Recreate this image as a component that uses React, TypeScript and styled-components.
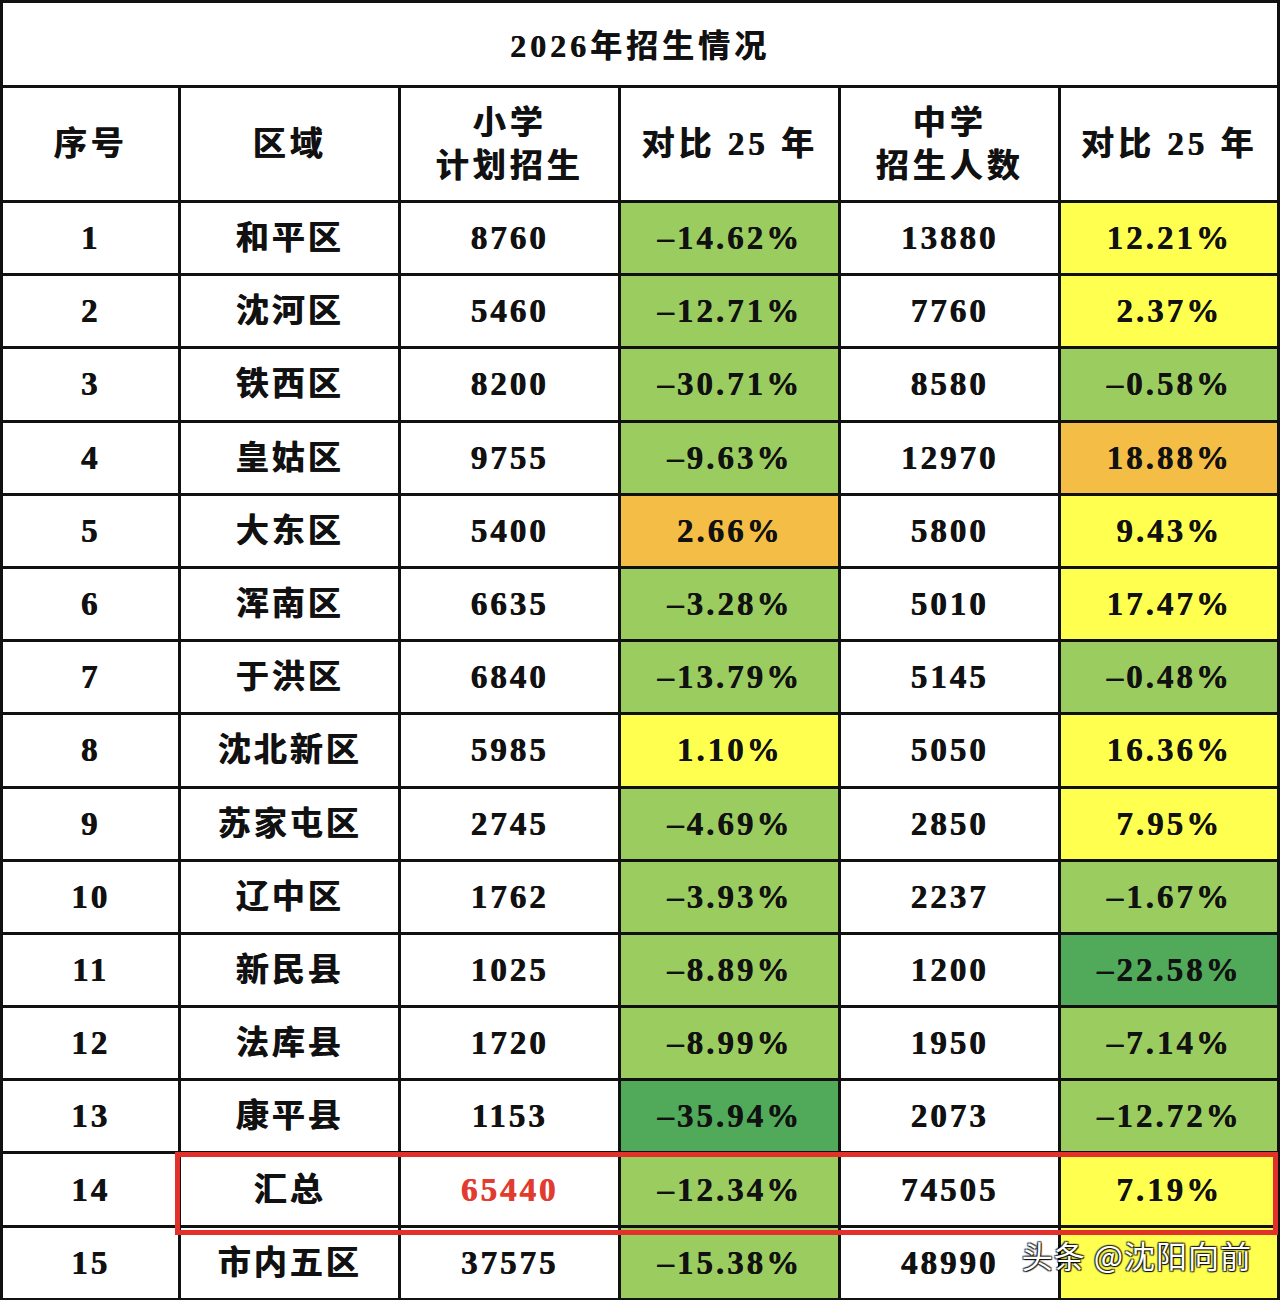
import React from 'react'
import styled, { createGlobalStyle } from 'styled-components'

const GlobalStyle = createGlobalStyle`
  html, body {
    margin: 0;
    padding: 0;
    background: #ffffff;
  }
  * {
    box-sizing: border-box;
  }
`

const Sheet = styled.div`
  position: relative;
  width: 1280px;
  border-left: 3px solid #111;
  border-top: 3px solid #111;
  font-family: "Liberation Serif", "Noto Sans CJK SC", serif;
  font-weight: 700;
  color: #111;
`

const Title = styled.div`
  height: 85px;
  display: flex;
  align-items: center;
  justify-content: center;
  border-right: 3px solid #111;
  border-bottom: 3px solid #111;
  font-size: 32px;
  letter-spacing: 4px;
  text-shadow: 0.6px 0 0 currentColor;
  padding-bottom: 3px;
`

const Row = styled.div<{ $tall?: boolean }>`
  position: relative;
  display: grid;
  grid-template-columns: 178px 220px 220px 220px 220px 1fr;
  height: ${p => (p.$tall ? '115px' : '73.2px')};
`

const Cell = styled.div<{ $bg?: string; $red?: boolean }>`
  display: flex;
  flex-direction: column;
  align-items: center;
  justify-content: center;
  border-right: 3px solid #111;
  border-bottom: 3px solid #111;
  background: ${p => p.$bg || '#ffffff'};
  color: ${p => (p.$red ? '#e23b2f' : '#111')};
  font-size: 33px;
  letter-spacing: 3px;
  line-height: 1;
  text-shadow: 0.7px 0 0 currentColor;
  padding-top: 1px;
`

const HeadLine = styled.span`
  display: block;
  line-height: 43px;
  letter-spacing: 4px;
`

const Highlight = styled.div`
  position: absolute;
  z-index: 2;
  left: 172px;
  right: 2px;
  top: -2px;
  bottom: -7px;
  border: 5px solid #e2312b;
  pointer-events: none;
`

const Watermark = styled.div`
  position: absolute;
  z-index: 3;
  right: 28px;
  bottom: 24px;
  font-family: "Noto Sans CJK SC", "Noto Sans", sans-serif;
  font-weight: 400;
  font-size: 31px;
  letter-spacing: 1px;
  color: #ffffff;
  text-shadow:
    1px 1px 1px rgba(0, 0, 0, 0.9),
    -1px -1px 1px rgba(0, 0, 0, 0.7),
    1px -1px 1px rgba(0, 0, 0, 0.7),
    -1px 1px 1px rgba(0, 0, 0, 0.7);
  pointer-events: none;
`

const LIGHT = '#9bcc5f'
const DARK = '#50aa5a'
const YELLOW = '#ffff4f'
const ORANGE = '#f4bd45'

type Item = {
  no: number
  area: string
  primary: string
  pDiff: string
  pBg: string
  middle: string
  mDiff: string
  mBg: string
}

const rows: Item[] = [
  { no: 1, area: '和平区', primary: '8760', pDiff: '–14.62%', pBg: LIGHT, middle: '13880', mDiff: '12.21%', mBg: YELLOW },
  { no: 2, area: '沈河区', primary: '5460', pDiff: '–12.71%', pBg: LIGHT, middle: '7760', mDiff: '2.37%', mBg: YELLOW },
  { no: 3, area: '铁西区', primary: '8200', pDiff: '–30.71%', pBg: LIGHT, middle: '8580', mDiff: '–0.58%', mBg: LIGHT },
  { no: 4, area: '皇姑区', primary: '9755', pDiff: '–9.63%', pBg: LIGHT, middle: '12970', mDiff: '18.88%', mBg: ORANGE },
  { no: 5, area: '大东区', primary: '5400', pDiff: '2.66%', pBg: ORANGE, middle: '5800', mDiff: '9.43%', mBg: YELLOW },
  { no: 6, area: '浑南区', primary: '6635', pDiff: '–3.28%', pBg: LIGHT, middle: '5010', mDiff: '17.47%', mBg: YELLOW },
  { no: 7, area: '于洪区', primary: '6840', pDiff: '–13.79%', pBg: LIGHT, middle: '5145', mDiff: '–0.48%', mBg: LIGHT },
  { no: 8, area: '沈北新区', primary: '5985', pDiff: '1.10%', pBg: YELLOW, middle: '5050', mDiff: '16.36%', mBg: YELLOW },
  { no: 9, area: '苏家屯区', primary: '2745', pDiff: '–4.69%', pBg: LIGHT, middle: '2850', mDiff: '7.95%', mBg: YELLOW },
  { no: 10, area: '辽中区', primary: '1762', pDiff: '–3.93%', pBg: LIGHT, middle: '2237', mDiff: '–1.67%', mBg: LIGHT },
  { no: 11, area: '新民县', primary: '1025', pDiff: '–8.89%', pBg: LIGHT, middle: '1200', mDiff: '–22.58%', mBg: DARK },
  { no: 12, area: '法库县', primary: '1720', pDiff: '–8.99%', pBg: LIGHT, middle: '1950', mDiff: '–7.14%', mBg: LIGHT },
  { no: 13, area: '康平县', primary: '1153', pDiff: '–35.94%', pBg: DARK, middle: '2073', mDiff: '–12.72%', mBg: LIGHT },
  { no: 14, area: '汇总', primary: '65440', pDiff: '–12.34%', pBg: LIGHT, middle: '74505', mDiff: '7.19%', mBg: YELLOW },
  { no: 15, area: '市内五区', primary: '37575', pDiff: '–15.38%', pBg: LIGHT, middle: '48990', mDiff: '', mBg: YELLOW },
]

const App = () => {
  return (
    <>
      <GlobalStyle />
      <Sheet>
        <Title>2026年招生情况</Title>
        <Row $tall>
          <Cell><HeadLine>序号</HeadLine></Cell>
          <Cell><HeadLine>区域</HeadLine></Cell>
          <Cell>
            <HeadLine>小学</HeadLine>
            <HeadLine>计划招生</HeadLine>
          </Cell>
          <Cell><HeadLine>对比 25 年</HeadLine></Cell>
          <Cell>
            <HeadLine>中学</HeadLine>
            <HeadLine>招生人数</HeadLine>
          </Cell>
          <Cell><HeadLine>对比 25 年</HeadLine></Cell>
        </Row>
        {rows.map(r => (
          <Row key={r.no}>
            <Cell>{r.no}</Cell>
            <Cell>{r.area}</Cell>
            <Cell $red={r.no === 14}>{r.primary}</Cell>
            <Cell $bg={r.pBg}>{r.pDiff}</Cell>
            <Cell>{r.middle}</Cell>
            <Cell $bg={r.mBg}>{r.mDiff}</Cell>
            {r.no === 14 && <Highlight />}
          </Row>
        ))}
        <Watermark>头条 @沈阳向前</Watermark>
      </Sheet>
    </>
  )
}

export default App
